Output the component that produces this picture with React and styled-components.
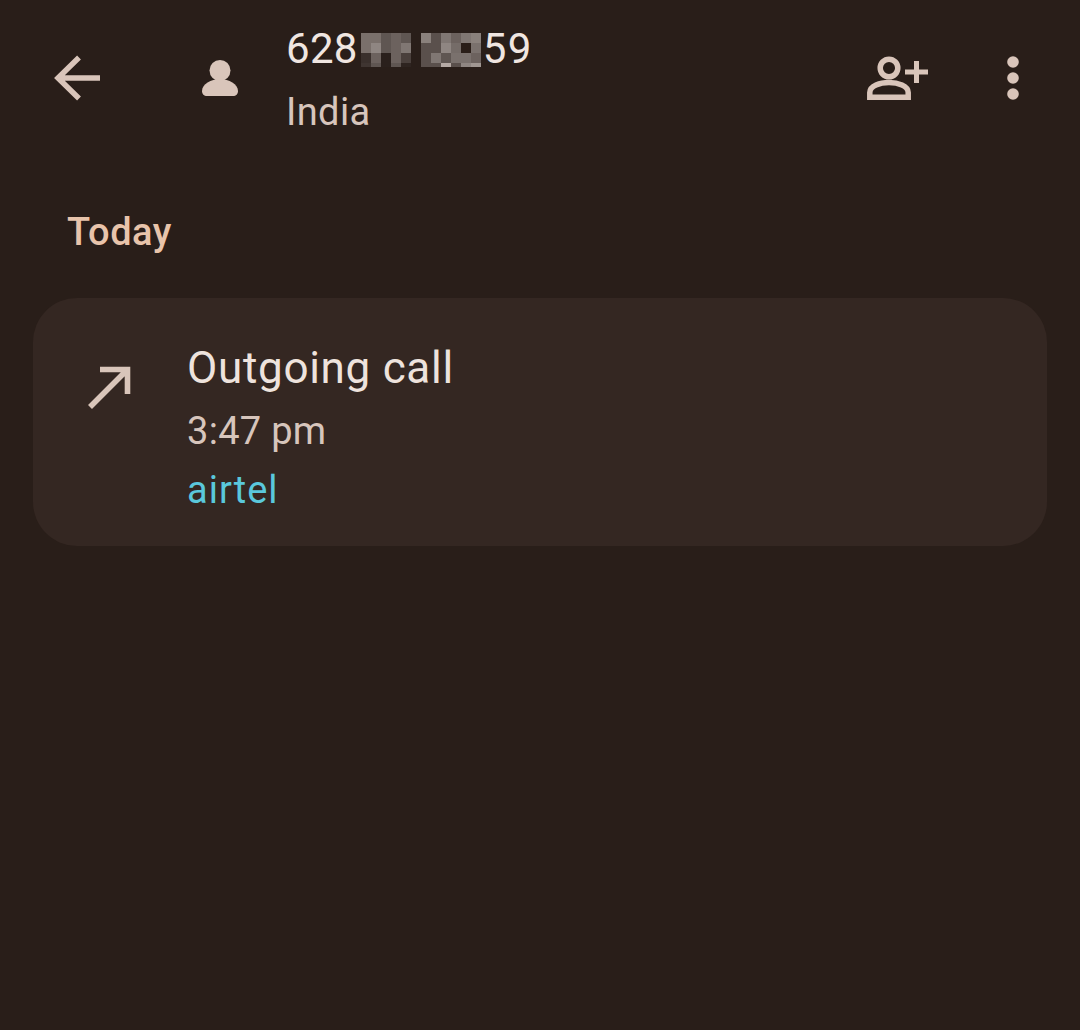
import React from "react";
import styled, { createGlobalStyle } from "styled-components";

const Global = createGlobalStyle`
  html, body { margin: 0; padding: 0; background: #291e19; }
  body { font-family: "Roboto", "Liberation Sans", sans-serif; }
`;

const Page = styled.div`
  width: 1080px;
  height: 1030px;
  overflow: hidden;
  background: #291e19;
`;

const Header = styled.header`
  display: flex;
  align-items: center;
  height: 156px;
  padding: 0 60px 0 52px;
  box-sizing: border-box;
`;

const IconSlot = styled.div`
  display: flex;
  flex: 0 0 ${(p) => p.$w}px;
  width: ${(p) => p.$w}px;
  svg { display: block; }
`;

const TitleBlock = styled.div`
  flex: 1;
  display: flex;
  flex-direction: column;
  gap: 15px;
`;

const Number = styled.div`
  display: flex;
  align-items: center;
  height: 52px;
  font-size: 42px;
  letter-spacing: 0.3px;
  color: #f0e6e1;
`;

const Tail = styled.span`
  letter-spacing: 1.4px;
`;

const Mosaic = styled.svg`
  display: block;
  margin: 2px 2px 0 3px;
`;

const Sub = styled.div`
  font-size: 38px;
  line-height: 44px;
  letter-spacing: 0.4px;
  color: #d7c5bc;
`;

const Section = styled.h2`
  margin: 0;
  padding: 9px 0 0 67px;
  height: 142px;
  display: flex;
  align-items: center;
  box-sizing: border-box;
  font-size: 38px;
  font-weight: 500;
  letter-spacing: 0.5px;
  color: #e8c4ab;
`;

const Card = styled.section`
  display: flex;
  margin: 0 33px;
  height: 248px;
  background: #342722;
  border-radius: 44px;
  padding: 44px 0 0 55px;
  box-sizing: border-box;
`;

const CardIcon = styled.div`
  flex: 0 0 99px;
  padding-top: 22px;
  svg { display: block; }
`;

const CardText = styled.div`
  display: flex;
  flex-direction: column;
`;

const CallTitle = styled.div`
  font-size: 44px;
  line-height: 52px;
  letter-spacing: 0.7px;
  color: #eee3dd;
`;

const CallMeta = styled.div`
  font-size: 38px;
  line-height: 60px;
  letter-spacing: ${(p) => (p.$accent ? "1px" : "0.3px")};
  color: ${(p) => (p.$accent ? "#5ac8dc" : "#d7c5bc")};
  margin-top: ${(p) => (p.$accent ? "-1px" : "7px")};
`;

const ICON = "#d9c5ba";

const BackIcon = () => (
  <svg width="50" height="50" viewBox="0 0 50 50" fill="none" stroke={ICON} strokeWidth="5.5">
    <path d="M5 25H48M27 4.5L6 25L27 45.5" />
  </svg>
);

const PersonIcon = () => (
  <svg width="40" height="40" viewBox="0 -2 40 40" fill={ICON}>
    <circle cx="20" cy="10.5" r="10.5" />
    <path d="M2 31c0-7 9-12 18-12s18 5 18 12c0 3-2 5-5 5H7c-3 0-5-2-5-5z" />
  </svg>
);

const AddPersonIcon = () => (
  <svg width="64" height="44" viewBox="0 0 64 44" fill="none" stroke={ICON} strokeWidth="5.5">
    <circle cx="24" cy="12" r="8.8" />
    <path d="M4.8 41.2V36.5C4.8 30 15 26.5 24 26.5S43.2 30 43.2 36.5V41.2Z" />
    <path d="M40 16H63M51.5 5V27" strokeWidth="5" />
  </svg>
);

const MoreIcon = () => (
  <svg width="14" height="50" viewBox="0 0 14 50" fill={ICON}>
    <circle cx="7" cy="9" r="5.8" />
    <circle cx="7" cy="25" r="5.8" />
    <circle cx="7" cy="41" r="5.8" />
  </svg>
);

const CallOutIcon = () => (
  <svg width="46" height="46" viewBox="0 0 46 46" fill="none" stroke={ICON} strokeWidth="5.6">
    <path d="M2 43L39.5 5.5M12 5.5H39.5V30" />
  </svg>
);

const CELL_H = [10, 10, 10, 4];
const GROUP_A = [
  ["#7a706b", "#7a706b", "#5f5652", "#6c625e", "#5f5652"],
  ["#7a706b", "#8f8682", "#5f5652", "#6c625e", "#807773"],
  ["#3a302c", "#6c625e", "#2a201c", "#6c625e", "#4a403c"],
  ["#3f3531", "#5f5652", "#2a201c", "#5f5652", "#2e2420"],
];
const GROUP_B = [
  ["#8a817c", "#5a504c", "#807773", "#6c625e", "#807773", "#8a817c"],
  ["#5a504c", "#5a504c", "#8f8682", "#756c68", "#2a1e18", "#7a716d"],
  ["#5a504c", "#807773", "#5f5652", "#7a716d", "#7a716d", "#6c625e"],
  ["#5a504c", "#5a504c", "#b5aaa5", "#5a504c", "#8f8682", "#a09792"],
];

const Rects = ({ rows, x0 }) =>
  rows.map((row, r) =>
    row.map((c, i) => (
      <rect
        key={`${x0}-${r}-${i}`}
        x={x0 + i * 10}
        y={CELL_H.slice(0, r).reduce((a, b) => a + b, 0)}
        width="10"
        height={CELL_H[r]}
        fill={c}
      />
    ))
  );

const Redaction = () => (
  <Mosaic width="120" height="34" viewBox="0 0 120 34" shapeRendering="crispEdges">
    <Rects rows={GROUP_A} x0={0} />
    <Rects rows={GROUP_B} x0={60} />
  </Mosaic>
);

export default function App() {
  return (
    <Page>
      <Global />
      <Header>
        <IconSlot $w={148}><BackIcon /></IconSlot>
        <IconSlot $w={86}><PersonIcon /></IconSlot>
        <TitleBlock>
          <Number>628<Redaction /><Tail>59</Tail></Number>
          <Sub>India</Sub>
        </TitleBlock>
        <IconSlot $w={141}><AddPersonIcon /></IconSlot>
        <IconSlot $w={14}><MoreIcon /></IconSlot>
      </Header>
      <Section>Today</Section>
      <Card>
        <CardIcon><CallOutIcon /></CardIcon>
        <CardText>
          <CallTitle>Outgoing call</CallTitle>
          <CallMeta>3:47 pm</CallMeta>
          <CallMeta $accent>airtel</CallMeta>
        </CardText>
      </Card>
    </Page>
  );
}
